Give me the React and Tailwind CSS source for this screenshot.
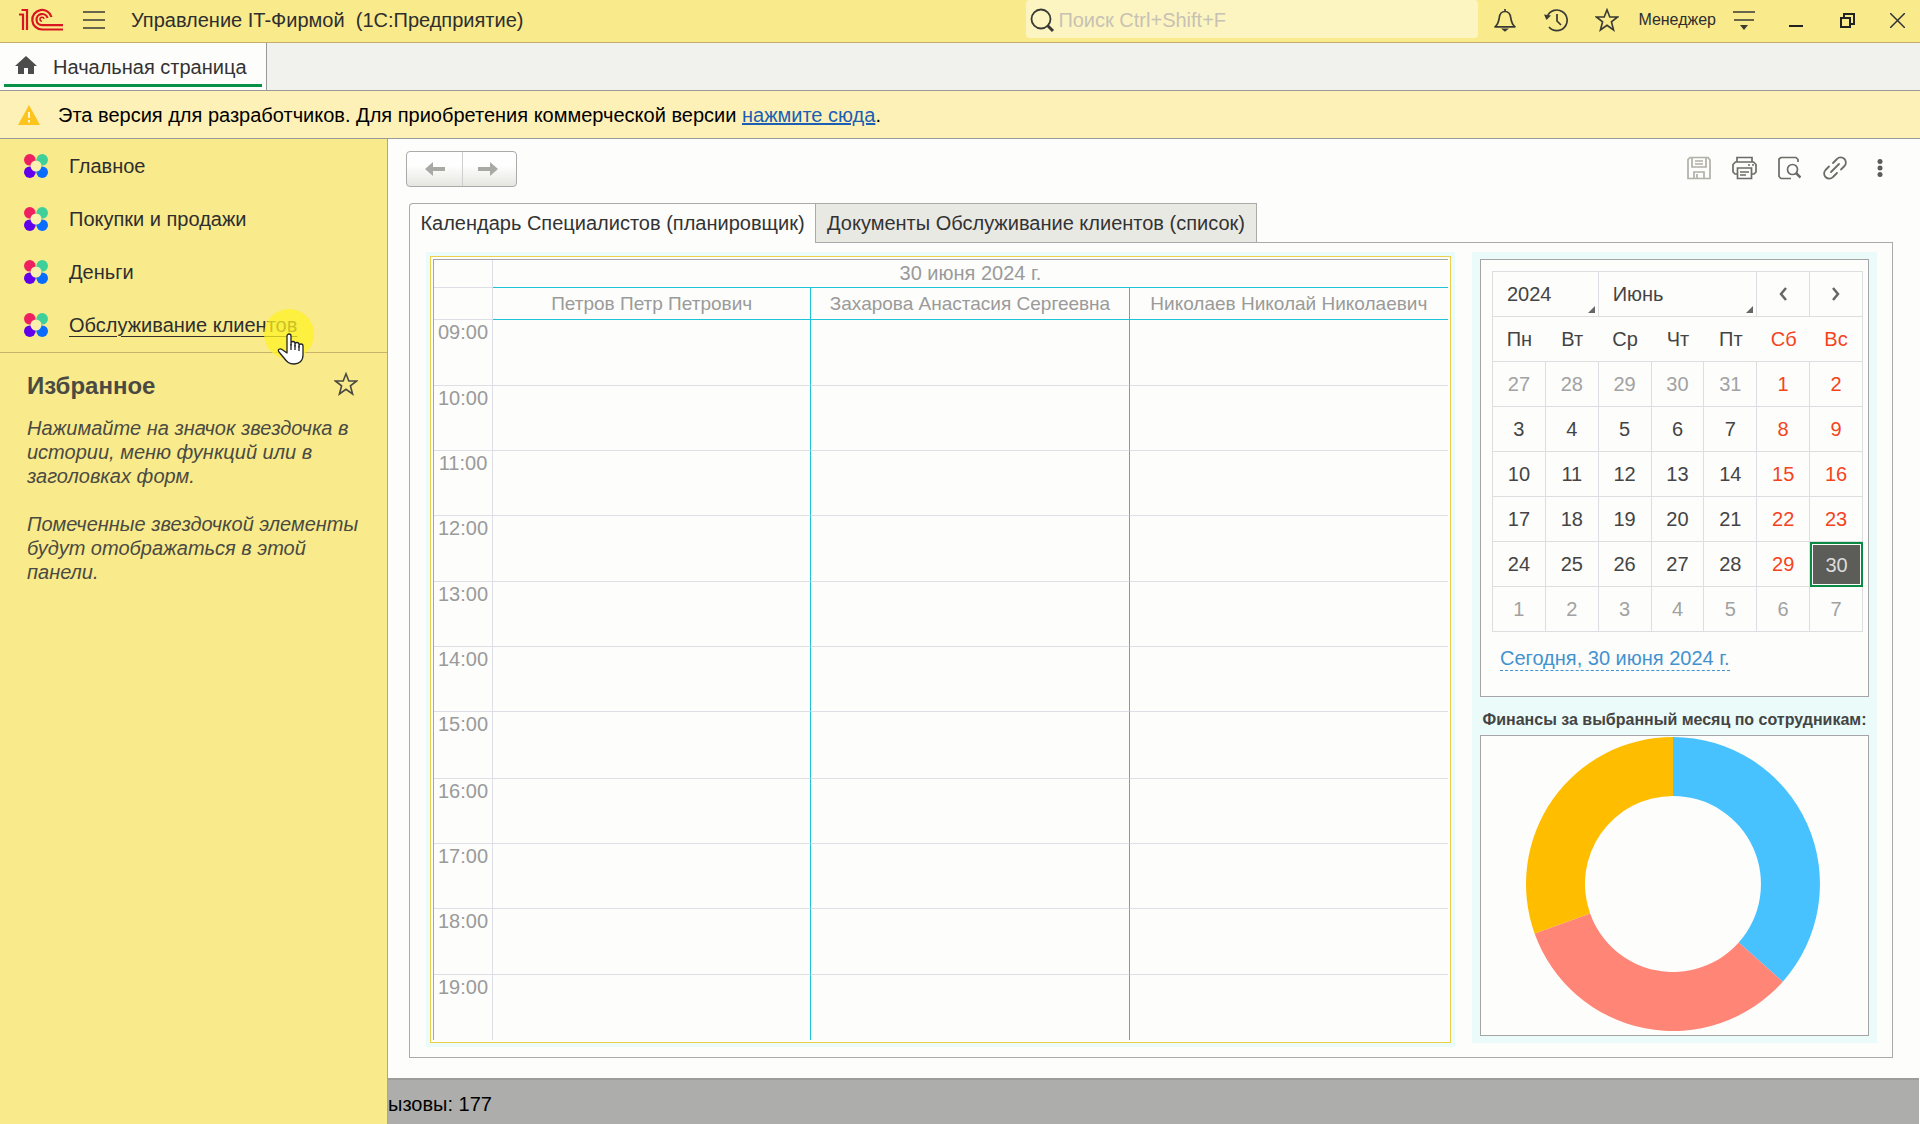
import React from "react";

const sections = ["Главное", "Покупки и продажи", "Деньги", "Обслуживание клиентов"];
const people = ["Петров Петр Петрович", "Захарова Анастасия Сергеевна", "Николаев Николай Николаевич"];
const hours = ["09:00", "10:00", "11:00", "12:00", "13:00", "14:00", "15:00", "16:00", "17:00", "18:00", "19:00"];
const weekdays = ["Пн", "Вт", "Ср", "Чт", "Пт", "Сб", "Вс"];
const weeks = [
  [27, 28, 29, 30, 31, 1, 2],
  [3, 4, 5, 6, 7, 8, 9],
  [10, 11, 12, 13, 14, 15, 16],
  [17, 18, 19, 20, 21, 22, 23],
  [24, 25, 26, 27, 28, 29, 30],
  [1, 2, 3, 4, 5, 6, 7],
];

function Logo() {
  return (
    <svg width="44" height="24" viewBox="0 0 44 24" fill="none" stroke="#d9161f" strokeWidth="2.2" className="shrink-0">
      <path d="M0 6.500H4V22M2.500 2H8V22" />
      <path d="M32.500 9A9.800 9.800 0 1 0 23 21.500H44" />
      <path d="M28.500 10A5.600 5.600 0 1 0 23 17.200H44" />
      <path d="M25 11A2 2 0 1 0 23 13.200" strokeWidth="1.500" />
    </svg>
  );
}

function Star({ size, color }) {
  return (
    <svg width={size} height={size} viewBox="0 0 24 24" fill="none" stroke={color} strokeWidth="1.6">
      <path d="M12 1.800 14.800 9H22.600L16.400 13.800 18.600 22 12 17.300 5.400 22 7.600 13.800 1.400 9H9.200Z" />
    </svg>
  );
}

function SectionIcon() {
  return (
    <svg width="24" height="24" viewBox="0 0 24 24" className="shrink-0">
      <path d="M6 6H18V18H6Z" fill="#a9a4c4" />
      <circle cx="5.800" cy="5.800" r="5.800" fill="#ee2060" />
      <circle cx="18.200" cy="5.800" r="5.800" fill="#3fd09a" />
      <circle cx="5.800" cy="18.200" r="5.800" fill="#6200ea" />
      <circle cx="18.200" cy="18.200" r="5.800" fill="#0a6cff" />
      <circle cx="12" cy="12" r="5.500" fill="#fbf0b0" />
    </svg>
  );
}

function TitleBar() {
  return (
    <header className="flex h-[43px] items-center border-b border-[#c4ac6c] bg-[#f9ea8c] text-[#2e2e2e]">
      <div className="flex flex-1 items-center pb-0.5 pl-[19px]">
        <Logo />
        <button aria-label="Меню функций" className="ml-5">
          <svg width="22" height="20" viewBox="0 0 22 20" stroke="#3a3a34" strokeWidth="1.600">
            <path d="M0 2H22M0 10H22M0 18H22" />
          </svg>
        </button>
        <h1 className="ml-[26px] whitespace-pre text-[20px] leading-6">Управление IT-Фирмой  (1С:Предприятие)</h1>
      </div>
      <label className="mb-1 flex h-[38px] w-[452px] items-center rounded bg-[#fdf5c1] pt-px pl-[3px]">
        <svg width="26" height="26" viewBox="0 0 26 26" fill="none" stroke="#3a3a34" strokeWidth="1.800">
          <circle cx="12" cy="12" r="9.500" />
          <path d="M18.500 18.500 24 24" strokeWidth="3" />
        </svg>
        <input aria-label="Поиск" placeholder="Поиск Ctrl+Shift+F" className="ml-[3px] min-w-0 flex-1 bg-transparent text-[20px] leading-6 outline-none placeholder:text-[#c6c2b4]" />
      </label>
      <div className="flex items-center pb-0.5">
        <button aria-label="Уведомления" className="ml-[15px]">
          <svg width="24" height="24" viewBox="0 0 24 24" fill="none" stroke="#3a3a34" strokeWidth="1.700">
            <path d="M2 18.800C5.500 16 5.800 13 6.300 9.500 6.800 6 9 3.500 12 3.500S17.200 6 17.700 9.500C18.200 13 18.500 16 22 18.800ZM12 1V3.500" strokeLinejoin="round" />
            <path d="M8 20.500H16L12 23.800Z" fill="#3a3a34" stroke="none" />
          </svg>
        </button>
        <button aria-label="История" className="ml-[27px]">
          <svg width="25" height="24" viewBox="0 0 25 24" fill="none" stroke="#3a3a34" strokeWidth="1.700">
            <path d="M3.500 8A10.300 10.300 0 1 1 5 19M13 6V13L17 17" />
            <path d="M0 6.500 7 7.500 2.500 12Z" fill="#3a3a34" stroke="none" />
          </svg>
        </button>
        <button aria-label="Избранное" className="ml-[26px]"><Star size={24} color="#3a3a34" /></button>
        <button className="ml-[19px] text-[16px] leading-5">Менеджер</button>
        <button aria-label="Настройки" className="ml-[17px]">
          <svg width="22" height="20" viewBox="0 0 22 20" stroke="#3a3a34" strokeWidth="1.600">
            <path d="M0 2H22M1 10H21" />
            <path d="M7 15H15L11 20Z" fill="#3a3a34" stroke="none" />
          </svg>
        </button>
        <button aria-label="Свернуть" className="ml-[34px]">
          <svg width="14" height="20" viewBox="0 0 14 20"><path d="M0 16H14" stroke="#222" strokeWidth="2" /></svg>
        </button>
        <button aria-label="Восстановить" className="ml-[37px]">
          <svg width="15" height="15" viewBox="0 0 15 15" fill="none" stroke="#222" strokeWidth="2">
            <path d="M1 5H10V14H1ZM4 5V1H14V11H10" />
          </svg>
        </button>
        <button aria-label="Закрыть" className="mr-[15px] ml-[35px]">
          <svg width="15" height="15" viewBox="0 0 15 15" stroke="#333" strokeWidth="1.500"><path d="M0 0 15 15M15 0 0 15" /></svg>
        </button>
      </div>
    </header>
  );
}

function Sidebar() {
  return (
    <aside className="w-[388px] shrink-0 border-r border-[#b9a76c] bg-[#f9ea8c] text-[#2e2e2e]">
      <nav className="relative border-b border-[#c9b26c] pb-px">
        <ul>
          {sections.map((name, i) => (
            <li key={name} className="flex h-[53px] items-center pl-6">
              <SectionIcon />
              <a href="#" className={i === 3 ? "ml-[21px] text-[20px] leading-6 underline decoration-1 underline-offset-4" : "ml-[21px] text-[20px] leading-6"}>{name}</a>
            </li>
          ))}
        </ul>
        <div className="absolute top-[170px] left-[264px] size-[50px] rounded-full bg-[#fdf224]/75" />
        <svg width="27" height="32" viewBox="0 0 27 32" className="absolute top-[194px] left-[277px]" fill="#fff" stroke="#222" strokeWidth="1.300" strokeLinejoin="round">
          <path d="M10 20V3A2 2 0 0 1 14 3V12V10.500A2 2 0 0 1 18 10.500V13 11.500A2 2 0 0 1 22 11.500V14 13A2 2 0 0 1 26 13V22C26 28 22 31 17 31 12 31 10 29 7 25L2 19C0 16.500 3 15 5 16.500Z" />
          <path d="M14 11V17M18 12V17M22 13V18" fill="none" />
        </svg>
      </nav>
      <section className="px-[27px] pt-[17px] text-[#4a4a42]">
        <div className="flex items-start justify-between pr-0.5">
          <h2 className="text-[24px] leading-8 font-bold">Избранное</h2>
          <button aria-label="Избранное" className="mt-0.5"><Star size={24} color="#4a4a42" /></button>
        </div>
        <p className="mt-[14px] -mr-3 text-[20px] leading-6 italic">Нажимайте на значок звездочка в<br />истории, меню функций или в<br />заголовках форм.</p>
        <p className="mt-6 -mr-3 text-[20px] leading-6 italic">Помеченные звездочкой элементы<br />будут отображаться в этой<br />панели.</p>
      </section>
    </aside>
  );
}

function Planner() {
  return (
    <div className="flex flex-1 bg-[#eafbf9] p-1">
      <div className="flex flex-1 border border-[#ecd04c] bg-[#fdfdfb] p-0.5">
        <table className="h-full w-full table-fixed border-separate border-spacing-0 border-t border-l border-[#a5a5a5] text-[20px] leading-6 text-[#9a9a9a]">
          <thead>
            <tr className="h-7">
              <th className="w-[59px] border-r border-b border-[#dedee6]" />
              <th colSpan={3} className="border-b border-[#1ec3da] p-0 pb-0.5 font-normal">30 июня 2024 г.</th>
            </tr>
            <tr className="h-8">
              <th className="border-r border-b border-[#dedee6]" />
              {people.map((p, i) => (
                <th key={p} className={i < 2 ? "border-r border-b border-[#1ec3da] p-0 text-[19px] font-normal whitespace-nowrap" : "border-b border-[#1ec3da] p-0 text-[19px] font-normal whitespace-nowrap"}>{p}</th>
              ))}
            </tr>
          </thead>
          <tbody>
            {hours.map((h, i) => {
              const line = i < 10 ? "border-b border-b-[#dedee6]" : "";
              return (
                <tr key={h} className={i % 3 === 0 ? "h-[66px]" : "h-[65px]"}>
                  <th className={`border-r border-r-[#dedee6] p-0 align-top font-normal ${line}`}>{h}</th>
                  <td className={`border-r border-r-[#1ec3da] ${line}`} />
                  <td className={`border-r border-r-[#1ec3da] ${line}`} />
                  <td className={line} />
                </tr>
              );
            })}
          </tbody>
        </table>
      </div>
    </div>
  );
}

function Calendar() {
  return (
    <div className="h-[438px] border border-[#a5a5a5] bg-[#fdfdfb] pt-[11px] pr-[5px] pl-[11px] text-[20px] leading-6 text-[#444]">
      <div className="grid grid-cols-7 border-t border-l border-[#dedee2]">
        <button className="relative col-span-2 h-11 border-r border-[#dedee2] pl-3.5 text-left">
          2024<Corner />
        </button>
        <button className="relative col-span-3 border-r border-[#dedee2] pl-3.5 text-left">
          Июнь<Corner />
        </button>
        <button aria-label="Предыдущий месяц" className="flex items-center justify-center border-r border-[#dedee2]">
          <svg width="8" height="14" viewBox="0 0 8 14" fill="none" stroke="#666" strokeWidth="2.500"><path d="M7 1 2 7 7 13" /></svg>
        </button>
        <button aria-label="Следующий месяц" className="flex items-center justify-center border-r border-[#dedee2]">
          <svg width="8" height="14" viewBox="0 0 8 14" fill="none" stroke="#666" strokeWidth="2.500"><path d="M1 1 6 7 1 13" /></svg>
        </button>
      </div>
      <table className="w-full table-fixed border-separate border-spacing-0 border-l border-[#dedee2] text-center">
        <thead>
          <tr className="h-[46px]">
            {weekdays.map((d, i) => (
              <th key={d} className={`border-t border-b border-[#dedee2] p-0 font-normal ${i > 4 ? "text-[#f4441c]" : ""} ${i === 6 ? "border-r" : ""}`}>{d}</th>
            ))}
          </tr>
        </thead>
        <tbody>
          {weeks.map((week, w) => (
            <tr key={w} className="h-[45px]">
              {week.map((d, i) => {
                const muted = (w === 0 && d > 20) || w === 5;
                if (w === 4 && i === 6)
                  return (
                    <td key={i} className="border-2 border-[#0b8a43] p-px">
                      <div className="flex h-[39px] items-center justify-center bg-[#5c5c58] text-[#dcdcdc]">{d}</div>
                    </td>
                  );
                return (
                  <td key={i} className={`border-r border-b border-[#dedee2] p-0 ${muted ? "text-[#a2a2a2]" : i > 4 ? "text-[#f4441c]" : ""}`}>{d}</td>
                );
              })}
            </tr>
          ))}
        </tbody>
      </table>
      <a href="#" className="mt-[14px] ml-2 inline-block border-b border-dashed border-[#4392d0] text-[#4392d0]">Сегодня, 30 июня 2024 г.</a>
    </div>
  );
}

function Corner() {
  return (
    <svg width="7" height="7" viewBox="0 0 7 7" className="absolute right-[3px] bottom-[3px]"><path d="M7 0V7H0Z" fill="#666" /></svg>
  );
}

function Donut() {
  return (
    <svg width="294" height="294" viewBox="-147 -147 294 294" role="img" aria-label="Финансы по сотрудникам">
      <path d="M0-147A147 147 0 0 1 109.800 97.700L65.700 58.500A88 88 0 0 0 0-88Z" fill="#48c2ff" />
      <path d="M109.800 97.700A147 147 0 0 1-138.400 49.500L-82.900 29.600A88 88 0 0 0 65.700 58.500Z" fill="#ff8577" />
      <path d="M-138.400 49.500A147 147 0 0 1 0-147V-88A88 88 0 0 0-82.900 29.600Z" fill="#ffbd00" />
    </svg>
  );
}

function Toolbar() {
  return (
    <div className="flex items-start justify-between pr-[37px] pl-[18px]">
      <div className="flex h-9 overflow-hidden rounded border border-[#aaa] bg-linear-to-b from-[#fefefe] from-40% to-[#e6e6e0]">
        <button aria-label="Назад" className="flex w-14 items-center justify-center border-r border-[#cfcfcf]">
          <svg width="20" height="16" viewBox="0 0 20 16" fill="#a8a8a4"><path d="M0 8 8 1V6H20V10H8V15Z" /></svg>
        </button>
        <button aria-label="Вперед" className="flex w-[53px] items-center justify-center pr-1">
          <svg width="20" height="16" viewBox="0 0 20 16" fill="#a8a8a4"><path d="M20 8 12 1V6H0V10H12V15Z" /></svg>
        </button>
      </div>
      <div className="flex items-center gap-[21px] pt-[5px]">
        <button aria-label="Сохранить">
          <svg width="24" height="24" viewBox="0 0 24 24" fill="none" stroke="#b0b0a8" strokeWidth="1.700">
            <path d="M3 1.500H21L23 4V22.500H1V3.500ZM5 2V11H19V2M8 5H16M8 8H16M7 22V16H17V22M10 18V22" />
          </svg>
        </button>
        <button aria-label="Печать">
          <svg width="25" height="24" viewBox="0 0 25 24" fill="none" stroke="#6c6c66" strokeWidth="1.700">
            <path d="M5 6V1.500H20V6M5 18H3L1 16V8.500L3.500 6H21.500L24 8.500V16L22 18H20M5.500 12H19.500V22.500H5.500ZM8 16H17M8 19H14M16 9H18M20 9H22" />
          </svg>
        </button>
        <button aria-label="Просмотр">
          <svg width="23" height="24" viewBox="0 0 23 24" fill="none" stroke="#6c6c66" strokeWidth="1.700">
            <path d="M13 22.500H3L1 20.500V3L3 1.500H18L20 3.500V6" />
            <circle cx="14.500" cy="13.500" r="5" />
            <path d="M18 17 22.500 21.500" strokeWidth="2.500" />
          </svg>
        </button>
        <button aria-label="Ссылка" className="ml-px">
          <svg width="24" height="24" viewBox="0 0 24 24" fill="none" stroke="#6c6c66" strokeWidth="1.800" strokeLinecap="round">
            <path d="M10 7 14 3A4.800 4.800 0 0 1 21.500 10L18 13.500M14 17 10 21A4.800 4.800 0 0 1 2.500 14L6 10.500M8 16 16 8" />
          </svg>
        </button>
        <button aria-label="Ещё" className="ml-[9px]">
          <svg width="6" height="18" viewBox="0 0 6 18" fill="#5c5c58"><circle cx="3" cy="2.500" r="2.500" /><circle cx="3" cy="9" r="2.500" /><circle cx="3" cy="15.500" r="2.500" /></svg>
        </button>
      </div>
    </div>
  );
}

export default function App() {
  return (
    <div className="flex min-h-screen flex-col bg-[#fdfdfb] font-['Liberation_Sans',Arial,sans-serif]">
      <TitleBar />
      <div className="flex h-12 border-b border-[#999] bg-[#f1f1ee]">
        <div className="flex w-[267px] flex-col border-r border-[#999] bg-[#fdfdfb] px-1 pb-[3px] text-[#333]">
          <button className="flex flex-1 items-center border-b-3 border-[#079247] pt-1.5 pl-[11px] text-[20px] leading-6">
            <svg width="22" height="18" viewBox="0 0 22 18" fill="#4c4c4c" className="mr-4 mb-1"><path d="M11 0 22 10H19V18H13V12H9V18H3V10H0Z" /></svg>
            Начальная страница
          </button>
        </div>
      </div>
      <div className="flex h-12 items-center border-b border-[#999] bg-[#fdf1b8] pl-[18px] text-[20px] leading-6 text-black">
        <svg width="22" height="20" viewBox="0 0 22 20" className="mr-[18px]">
          <path d="M11 0 22 20H0Z" fill="#fcc41c" />
          <path d="M11 7V13M11 15V17.500" stroke="#fff6d0" strokeWidth="2" />
        </svg>
        <p>Эта версия для разработчиков. Для приобретения коммерческой версии <a href="#" className="text-[#1a5fb4] underline">нажмите сюда</a>.</p>
      </div>
      <div className="flex flex-1">
        <Sidebar />
        <div className="flex min-w-0 flex-1 flex-col">
          <main className="flex flex-1 flex-col pt-3 pb-5">
            <Toolbar />
            <div className="mt-4 mr-[27px] ml-[21px] flex flex-1 flex-col text-[20px] leading-6 text-[#333]">
              <div role="tablist" className="flex">
                <button role="tab" aria-selected="true" className="h-10 w-[406px] rounded-tl border-t border-l border-[#aaa] pb-px whitespace-nowrap">Календарь Специалистов (планировщик)</button>
                <button role="tab" aria-selected="false" className="h-10 w-[442px] border border-[#aaa] bg-[#e9e9e4] whitespace-nowrap">Документы Обслуживание клиентов (список)</button>
                <div className="flex-1 border-b border-[#aaa]" />
              </div>
              <div className="flex flex-1 gap-[17px] border-x border-b border-[#aaa] pt-[9px] pr-[15px] pb-[10px] pl-4">
                <Planner />
                <div className="flex w-[405px] flex-col self-start bg-[#eafbf9] px-2 py-[7px]">
                  <Calendar />
                  <h3 className="pt-[13px] pb-[5px] text-center text-[16px] leading-5 font-bold whitespace-nowrap text-[#444]">Финансы за выбранный месяц по сотрудникам:</h3>
                  <div className="flex h-[301px] justify-center border border-[#a5a5a5] bg-[#fdfdfb] pt-px pr-[3px]"><Donut /></div>
                </div>
              </div>
            </div>
          </main>
          <footer className="mr-px flex h-[46px] items-center border-t-2 border-[#9c9c98] bg-[#adadac] pt-1 text-[20px] leading-6 text-black">
            <p>ызовы: 177</p>
          </footer>
        </div>
      </div>
    </div>
  );
}
